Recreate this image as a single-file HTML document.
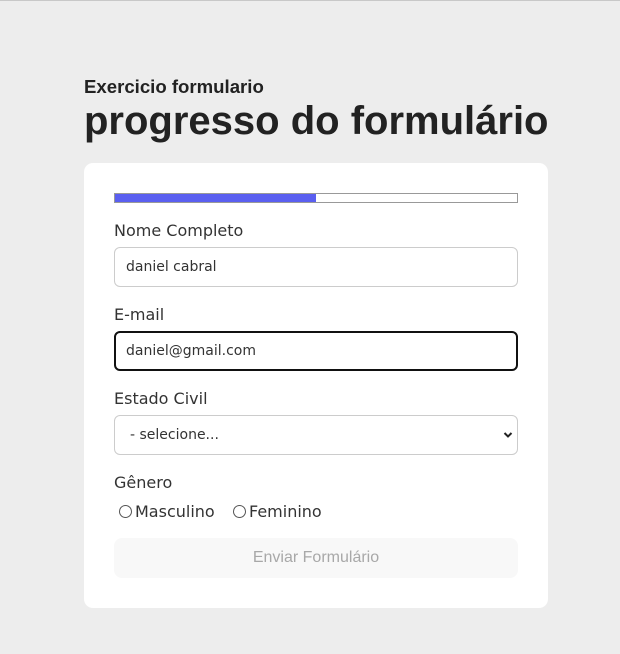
<!DOCTYPE html>
<html><head><meta charset="utf-8"><style>
body{margin:0;width:620px;height:654px;background:#ededed;position:relative;overflow:hidden;font-family:"DejaVu Sans",sans-serif;color:#222}
.top{position:absolute;left:0;top:0;width:620px;height:1px;background:#c8c8c8}
.a{position:absolute;white-space:nowrap}
h1,h2{margin:0;font-family:"Liberation Sans",Arial,sans-serif;font-weight:bold;color:#222}
.card{position:absolute;left:84px;top:163px;width:464px;height:445px;background:#fff;border-radius:9px}
.bar{position:absolute;left:114px;top:193px;width:402px;height:8px;border:1px solid #999;background:#fff}
.bar div{width:201px;height:8px;background:#5a5ff0}
.lbl{font-size:16px;color:#333}
.inp{position:absolute;left:114px;height:40px;border:1px solid #ccc;border-radius:6px;box-sizing:border-box;width:404px;font-size:14px;color:#333;padding-left:11px;line-height:38px}
.radio{display:inline-block;width:11px;height:11px;border:1px solid #555;border-radius:50%;vertical-align:-1px;margin-right:3px}
.btn{position:absolute;left:114px;top:538px;width:404px;height:40px;background:#f8f8f8;border-radius:8px;font-family:"Liberation Sans",Arial,sans-serif;font-size:16px;color:#a8a8a8;text-align:center;line-height:40px}
</style></head><body>
<div class="top"></div>
<h2 class="a" style="left:84px;top:76px;font-size:18.6px">Exercicio formulario</h2>
<h1 class="a" style="left:84px;top:99px;font-size:40px">progresso do formulário</h1>
<div class="card"></div>
<div class="bar"><div></div></div>
<div class="a lbl" style="left:114px;top:221px">Nome Completo</div>
<div class="inp" style="top:247px">daniel cabral</div>
<div class="a lbl" style="left:114px;top:305px">E-mail</div>
<div class="inp" style="top:331px;border:2px solid #111;padding-left:10px;line-height:36px">daniel@gmail.com</div>
<div class="a lbl" style="left:114px;top:389px">Estado Civil</div>
<div class="inp" style="top:415px;padding-left:15px">- selecione...
<svg style="position:absolute;right:4px;top:15px" width="10" height="8" viewBox="0 0 10 8"><path d="M1.5 2 L5 5.5 L8.5 2" stroke="#222" stroke-width="2" fill="none"/></svg></div>
<div class="a lbl" style="left:114px;top:473px">Gênero</div>
<div class="a lbl" style="left:119px;top:502px"><span class="radio"></span>Masculino</div>
<div class="a lbl" style="left:233px;top:502px"><span class="radio"></span>Feminino</div>
<div class="btn">Enviar Formulário</div>
</body></html>
